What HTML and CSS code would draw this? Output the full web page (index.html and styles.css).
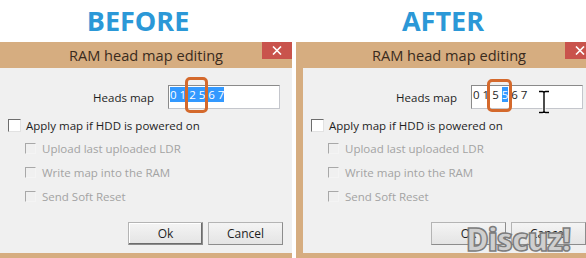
FILE: index.html
```html
<!DOCTYPE html>
<html lang="en">
<head>
  <meta charset="UTF-8">
  <title>RAM head map editing - before / after</title>
  <link rel="stylesheet" href="styles.css">
</head>
<body>
  <div class="page">
    <section class="panel panel-before">
      <h1 class="caption">BEFORE</h1>
      <div class="window">
        <div class="titlebar">
          <span class="title">RAM head map editing</span>
          <span class="close">
            <svg width="10" height="9" viewBox="0 0 10 9"><path d="M1 0.5L9 8.5M9 0.5L1 8.5" stroke="#fff" stroke-width="1.6"/></svg>
          </span>
        </div>
        <div class="client">
          <div class="field-row">
            <span class="field-label">Heads map</span>
            <div class="textbox"><span class="digits sel">0 1 2 5 6 7</span><span class="mark mark-before"></span></div>
          </div>
          <div class="check"><span class="box"></span>Apply map if HDD is powered on</div>
          <div class="sub">
            <div class="check disabled"><span class="box"></span>Upload last uploaded LDR</div>
            <div class="check disabled"><span class="box"></span>Write map into the RAM</div>
            <div class="check disabled"><span class="box"></span>Send Soft Reset</div>
          </div>
          <div class="buttons">
            <button class="btn btn-default">Ok</button>
            <button class="btn">Cancel</button>
          </div>
        </div>
      </div>
    </section>

    <section class="panel panel-after">
      <h1 class="caption">AFTER</h1>
      <div class="window">
        <div class="titlebar">
          <span class="title">RAM head map editing</span>
          <span class="close">
            <svg width="10" height="9" viewBox="0 0 10 9"><path d="M1 0.5L9 8.5M9 0.5L1 8.5" stroke="#fff" stroke-width="1.6"/></svg>
          </span>
        </div>
        <div class="client">
          <div class="field-row">
            <span class="field-label">Heads map</span>
            <div class="textbox"><span class="digits">0 1 5 <span class="sel">5</span> 6 7</span><span class="mark mark-after"></span>
              <svg class="ibeam" width="12" height="24" viewBox="0 0 12 24">
                <path d="M1 1.5H4.5Q6 1.5 6 3V21Q6 22.5 4.5 22.5H1M11 1.5H7.5Q6 1.5 6 3V21Q6 22.5 7.5 22.5H11" fill="none" stroke="#fff" stroke-width="3"/>
                <path d="M1 1.5H4.5Q6 1.5 6 3V21Q6 22.5 4.5 22.5H1M11 1.5H7.5Q6 1.5 6 3V21Q6 22.5 7.5 22.5H11" fill="none" stroke="#000" stroke-width="1.4"/>
              </svg>
            </div>
          </div>
          <div class="check"><span class="box"></span>Apply map if HDD is powered on</div>
          <div class="sub">
            <div class="check disabled"><span class="box"></span>Upload last uploaded LDR</div>
            <div class="check disabled"><span class="box"></span>Write map into the RAM</div>
            <div class="check disabled"><span class="box"></span>Send Soft Reset</div>
          </div>
          <div class="buttons">
            <button class="btn">Ok</button>
            <button class="btn">Cancel</button>
          </div>
          <span class="watermark">Discuz!</span>
        </div>
      </div>
    </section>
  </div>
</body>
</html>
```

FILE: styles.css
```css
body { margin: 0; background: #fff; font-family: "Open Sans", "Noto Sans", sans-serif; width: 586px; height: 258px; overflow: hidden; }
.page { display: flex; gap: 4px; }
.panel { flex: none; width: 292px; overflow: hidden; }
.panel-after { width: 290px; }

.caption { margin: 0; height: 42px; line-height: 42px; text-align: center; font-size: 27px; font-weight: 700; color: #2b98d7; }
.panel-before .caption { padding-right: 16px; }
.panel-after .caption { padding-left: 4px; }

.window { width: 292px; margin-left: -7px; border: 7px solid #d6ad80; border-top: 0; border-bottom-width: 5px; background: #d6ad80; }
.panel-after .window { margin-left: 0; }

.titlebar { height: 26px; display: grid; grid-template-columns: 30px 1fr 30px; }
.title { grid-column: 2; text-align: center; font-size: 14.6px; line-height: 26px; color: #3a2b1d; white-space: nowrap; }
.close { height: 17px; background: #c9534c; display: flex; align-items: center; justify-content: center; }

.client { position: relative; height: 185px; box-sizing: border-box; padding: 17px 0 8px; background: #f0f0f0; display: flex; flex-direction: column; font-size: 11.5px; color: #1e1e1e; }

.field-row { display: flex; align-items: center; gap: 14px; height: 24px; }
.field-label { width: 154px; text-align: right; }
.textbox { position: relative; width: 112px; height: 24px; box-sizing: border-box; padding: 2px 1px; background: #fff; border: 1px solid #c4c6cc; border-top-color: #8a8a8a; border-left-color: #8a8a8a; line-height: 14px; white-space: nowrap; }
.digits { white-space: pre; font-size: 11.5px; }
.sel { background: #3399ff; color: #fff; }

.mark { position: absolute; top: -9px; width: 23px; height: 36px; box-sizing: border-box; border: 3px solid #d4692c; border-radius: 5px; }
.mark-before { left: 16px; }
.mark-after { left: 15px; top: -7px; width: 25px; height: 33px; }
.ibeam { position: absolute; left: 66px; top: 4px; }

.check { display: flex; align-items: center; gap: 5px; height: 14px; margin-top: 9px; padding-left: 8px; }
.box { width: 13px; height: 13px; box-sizing: border-box; background: #fff; border: 1px solid #e2e2e2; border-top-color: #6d6d6d; border-left-color: #6d6d6d; }
.sub { display: flex; flex-direction: column; gap: 10px; margin-top: 9px; }
.sub .check { margin-top: 0; padding-left: 25px; gap: 6px; }
.check.disabled { color: #a3a3a3; }
.check.disabled .box { width: 11px; height: 11px; background: #f0f0f0; border-color: #f4f4f4; border-top-color: #a8a8a8; border-left-color: #a8a8a8; }

.buttons { margin-top: auto; display: flex; justify-content: flex-end; gap: 5px; padding-right: 9px; }
.btn { width: 75px; height: 23px; padding: 0; font-family: inherit; font-size: 12px; color: #1e1e1e; background: linear-gradient(#f4f4f4, #e4e4e4); border: 1px solid #8c8c8c; border-top-color: #b4b4b4; border-left-color: #b4b4b4; }
.btn-default { box-shadow: inset -1px -1px 0 #6c6c6c, inset 1px 1px 0 #fff; }

.watermark { position: absolute; left: 163px; top: 150px; font-size: 31px; font-weight: 800; letter-spacing: -1px; color: #cfcfcf; -webkit-text-stroke: 1.5px #7c7c7c; }
```
